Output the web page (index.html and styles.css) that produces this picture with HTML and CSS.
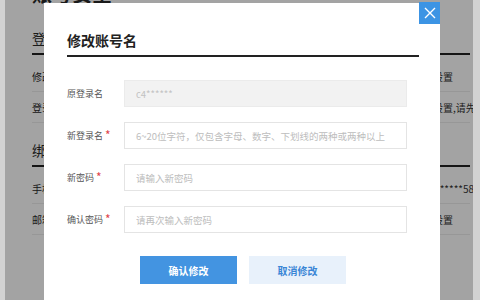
FILE: index.html
```html
<!DOCTYPE html>
<html lang="zh-CN">
<head>
  <meta charset="UTF-8">
  <title>账号安全</title>
  <link rel="stylesheet" href="styles.css">
</head>
<body>

  <div class="page">
    <h1 class="page-title">账号安全</h1>

    <h2 class="section-title">登录信息</h2>
    <div class="info-row first">
      <span class="info-name">修改登录名</span>
      <span class="info-value">已设置</span>
    </div>
    <div class="info-row">
      <span class="info-name">登录密码</span>
      <span class="info-value">未设置,请先设置登录名</span>
    </div>

    <h2 class="section-title second">绑定信息</h2>
    <div class="info-row first">
      <span class="info-name">手机号码</span>
      <span class="info-value">135*****58</span>
    </div>
    <div class="info-row">
      <span class="info-name">邮箱地址</span>
      <span class="info-value">未设置</span>
    </div>

    <!-- Dim layer + dialog -->
    <div class="mask"></div>

    <div class="dialog">
      <button class="dialog-close" aria-label="关闭">
        <svg width="12" height="12" viewBox="0 0 12 12">
          <path d="M1 1 L11 11 M11 1 L1 11" stroke="#fff" stroke-width="1.4" fill="none"/>
        </svg>
      </button>

      <h3 class="dialog-title">修改账号名</h3>

      <div class="form">
        <div class="form-row">
          <label class="form-label">原登录名</label>
          <input class="form-input" type="text" value="c4******" disabled>
        </div>
        <div class="form-row">
          <label class="form-label">新登录名<span class="req">*</span></label>
          <input class="form-input" type="text" placeholder="6~20位字符，仅包含字母、数字、下划线的两种或两种以上">
        </div>
        <div class="form-row">
          <label class="form-label">新密码<span class="req">*</span></label>
          <input class="form-input" type="password" placeholder="请输入新密码">
        </div>
        <div class="form-row">
          <label class="form-label">确认密码<span class="req">*</span></label>
          <input class="form-input" type="password" placeholder="请再次输入新密码">
        </div>
      </div>

      <div class="dialog-actions">
        <button class="btn btn-primary">确认修改</button>
        <button class="btn btn-light">取消修改</button>
      </div>
    </div>
  </div>

</body>
</html>
```

FILE: styles.css
```css
body {
  margin: 0;
  background: #d2d2d2;
  font-family: "Noto Sans CJK SC", "Noto Sans", sans-serif;
  color: #2a2a2a;
}

/* Page behind the dialog */
.page {
  position: relative;
  margin: 0 7px 0 5px;
  height: 300px;
  padding: 0 3px 0 27px;
  background: #fff;
  overflow: hidden;
}

.page-title {
  margin: -19px 0 0;
  font-size: 20px;
  line-height: 26px;
  font-weight: bold;
}

.section-title {
  margin: 21px 0 0;
  font-size: 14px;
  line-height: 20px;
  font-weight: normal;
  padding-bottom: 5px;
  border-bottom: 2px solid #222;
}

.section-title.second {
  margin-top: 17px;
}

.info-row {
  display: flex;
  height: 30px;
  align-items: center;
  font-size: 10px;
  border-bottom: 1px solid #ececec;
  white-space: nowrap;
}

.info-row.first {
  margin-top: 6px;
}

.info-name {
  flex-shrink: 0;
  width: 391px;
}

.info-value {
  flex-shrink: 0;
  color: #333;
}

/* Dim layer */
.mask {
  position: absolute;
  top: 0; left: 0;
  width: 100%; height: 100%;
  background: rgba(0, 0, 0, 0.36);
}

/* Dialog */
.dialog {
  position: absolute;
  left: 39px;
  top: 3px;
  width: 352px;
  height: 320px;
  padding: 27px 21px 0 23px;
  background: #fff;
}

.dialog-close {
  position: absolute;
  top: -1px;
  right: 0;
  width: 21px;
  height: 22px;
  padding: 0;
  border: none;
  background: #3c94e4;
  display: flex;
  justify-content: center;
  align-items: center;
}

.dialog-title {
  margin: 0;
  font-size: 14px;
  line-height: 20px;
  font-weight: bold;
  color: #222;
  padding-bottom: 5px;
  border-bottom: 2px solid #222;
}

.form {
  display: flex;
  flex-direction: column;
  gap: 15px;
  margin-top: 23px;
}

.form-row {
  display: flex;
  align-items: center;
}

.form-label {
  width: 57px;
  font-size: 9px;
  color: #555;
  white-space: nowrap;
}

.req {
  color: #e0454b;
  font-size: 12px;
  line-height: 1;
  margin-left: 2px;
  vertical-align: -1px;
}

.form-input {
  box-sizing: border-box;
  width: 283px;
  height: 27px;
  margin: 0;
  padding: 0 11px;
  border: 1px solid #e4e4e4;
  font-family: inherit;
  font-size: 9.5px;
  color: #333;
  background: #fff;
  outline: none;
}

.form-input::placeholder {
  color: #bdbdbd;
}

.form-input:disabled {
  background: #f2f2f2;
  border-color: #ebebeb;
  color: #c2c2c2;
}

.dialog-actions {
  display: flex;
  justify-content: center;
  gap: 12px;
  margin-top: 23px;
}

.btn {
  width: 97px;
  height: 28px;
  border: none;
  font-family: inherit;
  font-size: 10px;
  font-weight: bold;
  cursor: pointer;
}

.btn-primary {
  background: #4394e1;
  color: #fff;
}

.btn-light {
  background: #e8f1fb;
  color: #3a86d6;
}
```
